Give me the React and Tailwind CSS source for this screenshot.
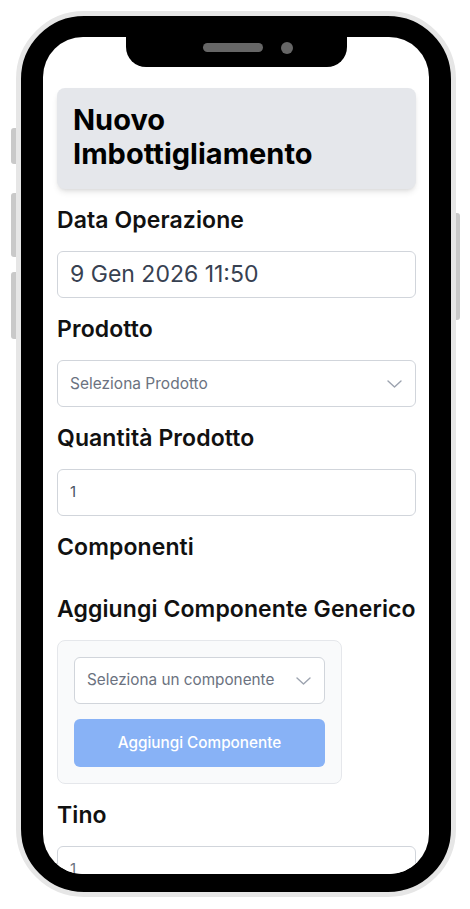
import React from "react";

function Chevron() {
  return (
    <svg width="15" height="8" viewBox="0 0 15 8" fill="none" className="shrink-0">
      <polyline points="1,1 7.5,7 14,1" stroke="#9ca3af" strokeWidth="1.4" strokeLinecap="round" strokeLinejoin="round" />
    </svg>
  );
}

function Label({ children }) {
  return <div className="text-[23px] leading-[28px] font-semibold tracking-[0.1px] text-[#111111]">{children}</div>;
}

export default function App() {
  return (
    <div
      className="w-[470px] h-[909px] bg-white pt-[11px] pl-[16px] overflow-hidden"
      style={{ fontFamily: "Inter, 'Noto Sans', sans-serif" }}
    >
      <div className="relative w-[440px] h-[886px] rounded-[68px] border-[5px] border-[#e6e6e6] bg-black pt-[21px] pb-[18px] px-[22px]">
        {/* side buttons */}
        <div className="absolute left-[-10px] top-[112px] w-[5px] h-[36px] rounded-l-[3px] bg-[#c9c9c9]" />
        <div className="absolute left-[-10px] top-[177px] w-[5px] h-[64px] rounded-l-[3px] bg-[#c9c9c9]" />
        <div className="absolute left-[-10px] top-[256px] w-[5px] h-[67px] rounded-l-[3px] bg-[#c9c9c9]" />
        <div className="absolute right-[-9px] top-[197px] w-[4px] h-[107px] rounded-r-[3px] bg-[#c9c9c9]" />

        <div className="relative w-full h-full bg-white rounded-[40px] overflow-hidden">
          {/* notch */}
          <div className="absolute top-0 left-[83px] w-[221px] h-[30px] bg-black rounded-b-[20px] flex items-center pl-[77px] pb-[9px] gap-[18px] z-10">
            <div className="w-[60px] h-[9px] rounded-full bg-[#666666]" />
            <div className="w-[12px] h-[12px] rounded-full bg-[#666666]" />
          </div>

          <div className="pt-[51px] pl-[14px] pr-[13px] flex flex-col gap-[17px]">
            <div className="bg-[#e5e7eb] rounded-lg shadow-md px-4 pt-[15px] pb-[18px]">
              <h1 className="text-[29px] leading-[34px] font-bold text-black">
                Nuovo
                <br />
                Imbottigliamento
              </h1>
            </div>

            <Label>Data Operazione</Label>
            <div className="h-[47px] border border-[#d1d5db] rounded-md bg-white flex items-center px-3 text-[23px] text-[#374151]">
              9 Gen 2026 11:50
            </div>

            <Label>Prodotto</Label>
            <div className="h-[47px] border border-[#d1d5db] rounded-md bg-white flex items-center justify-between pl-3 pr-[13px] text-[15.5px] text-[#6b7280]">
              <span>Seleziona Prodotto</span>
              <Chevron />
            </div>

            <Label>Quantità Prodotto</Label>
            <div className="h-[47px] border border-[#d1d5db] rounded-md bg-white flex items-center px-3 text-[15px] text-[#4b5563]">
              1
            </div>

            <Label>Componenti</Label>

            <div className="mt-[17px]">
              <Label>Aggiungi Componente Generico</Label>
            </div>

            <div className="w-[285px] bg-[#f9fafb] border border-[#e5e7eb] rounded-lg p-4 flex flex-col gap-[15px]">
              <div className="h-[47px] border border-[#d1d5db] rounded-md bg-white flex items-center justify-between pl-3 pr-[13px] text-[15.3px] text-[#6b7280]">
                <span>Seleziona un componente</span>
                <Chevron />
              </div>
              <div className="h-[48px] rounded-md bg-[#88b2f6] flex items-center justify-center text-white text-[15.3px] font-medium">
                Aggiungi Componente
              </div>
            </div>

            <Label>Tino</Label>
            <div className="h-[47px] border border-[#d1d5db] rounded-md bg-white flex items-center px-3 text-[15px] text-[#6b7280]">
              1
            </div>
          </div>
        </div>
      </div>
    </div>
  );
}
